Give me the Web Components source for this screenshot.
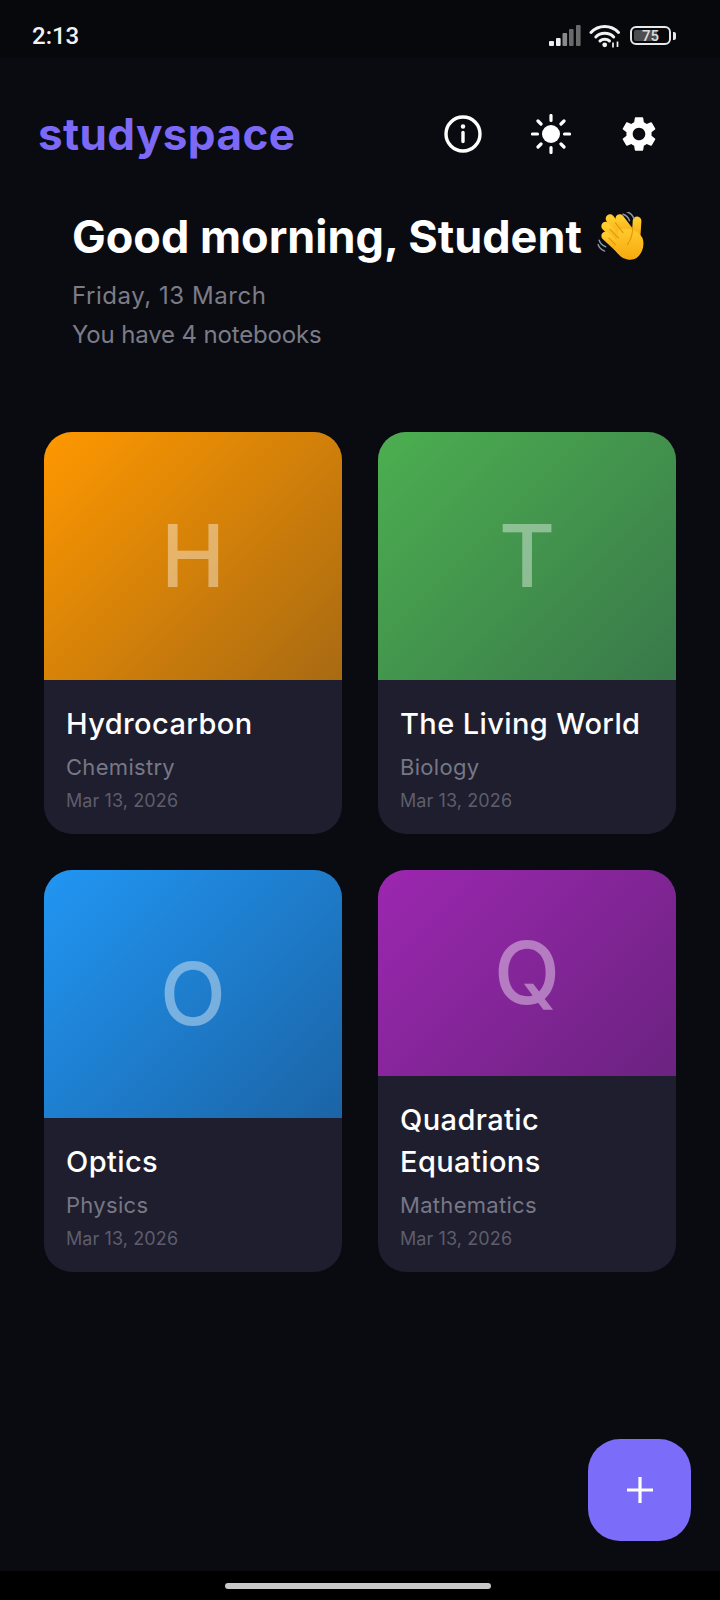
<!DOCTYPE html>
<html>
<head>
<meta charset="utf-8">
<title>studyspace</title>
<style>
    html, body { margin: 0; padding: 0; background: #0a0b10; }
    body { width: 720px; height: 1600px; overflow: hidden; font-family: Inter, "Noto Sans", sans-serif; }
</style>
</head>
<body>
<app-shell>
    <status-bar slot="status"></status-bar>
    <top-bar slot="top"></top-bar>
    <greeting-block slot="greeting"></greeting-block>
    <notebook-grid slot="grid">
        <notebook-card letter="H" title="Hydrocarbon" subject="Chemistry" date="Mar 13, 2026" from="#ff9800" to="#a86a12"></notebook-card>
        <notebook-card letter="T" title="The Living World" subject="Biology" date="Mar 13, 2026" from="#4caf50" to="#39784a"></notebook-card>
        <notebook-card letter="O" title="Optics" subject="Physics" date="Mar 13, 2026" from="#2196f3" to="#1b64a6"></notebook-card>
        <notebook-card letter="Q" title="Quadratic Equations" subject="Mathematics" date="Mar 13, 2026" from="#9c27b0" to="#6b2380"></notebook-card>
    </notebook-grid>
    <add-button slot="fab"></add-button>
</app-shell>

<script>
// ==== Web Component: AppShell ====
class AppShell extends HTMLElement {
    constructor() {
        super();
        this.attachShadow({ mode: 'open' });
        this.shadowRoot.innerHTML = `
            <style>
                :host {
                    display: flex;
                    flex-direction: column;
                    position: relative;
                    width: 720px;
                    height: 1600px;
                    background: #0a0b10;
                }
                main { flex: 1; }
                .nav {
                    height: 29px;
                    background: #000;
                    display: flex;
                    justify-content: center;
                    align-items: center;
                }
                .pill {
                    width: 266px;
                    height: 6px;
                    border-radius: 3px;
                    margin-right: 4px;
                    background: #c9c9c9;
                }
            </style>
            <slot name="status"></slot>
            <main>
                <slot name="top"></slot>
                <slot name="greeting"></slot>
                <slot name="grid"></slot>
            </main>
            <slot name="fab"></slot>
            <div class="nav"><div class="pill"></div></div>
        `;
    }
}

// ==== Web Component: StatusBar ====
class StatusBar extends HTMLElement {
    constructor() {
        super();
        this.attachShadow({ mode: 'open' });
        this.shadowRoot.innerHTML = `
            <style>
                :host {
                    display: flex;
                    align-items: center;
                    justify-content: space-between;
                    box-sizing: border-box;
                    height: 58px;
                    padding: 13px 44px 0 32px;
                    background: #07080b;
                    color: #f2f2f2;
                }
                .time { font: 500 24px Roboto, sans-serif; }
                .icons { display: flex; align-items: center; gap: 8px; }
                svg { display: block; }
                .battery {
                    width: 41px;
                    height: 19px;
                    box-sizing: border-box;
                    border: 2px solid #e8e8e8;
                    border-radius: 6px;
                    padding: 2px;
                    display: flex;
                    align-items: center;
                    justify-content: center;
                    font: 500 15px Roboto, sans-serif;
                    color: #dcdcdc;
                    background: linear-gradient(90deg, #4e4e50 0 70%, transparent 70%) content-box;
                }
                .nub {
                    width: 3px;
                    height: 8px;
                    background: #e8e8e8;
                    border-radius: 0 2px 2px 0;
                    margin-left: -6px;
                }
            </style>
            <span class="time">2:13</span>
            <div class="icons">
                <svg width="32" height="21" viewBox="0 0 32 21">
                    <rect x="0" y="16" width="5" height="5" rx="1" fill="#eee"/>
                    <rect x="7" y="13" width="4.6" height="8" rx="1" fill="#eee"/>
                    <rect x="13.5" y="8" width="4.6" height="13" rx="1" fill="#8a8a8a"/>
                    <rect x="20" y="4" width="4.6" height="17" rx="1" fill="#6a6a6a"/>
                    <rect x="27" y="0" width="4.6" height="21" rx="1" fill="#6a6a6a"/>
                </svg>
                <svg width="33" height="24" viewBox="0 0 33 24" fill="none" stroke="#f2f2f2" stroke-width="3" stroke-linecap="round">
                    <path d="M2 8.5C9.5 0.5 22 0.5 29.5 8.5"/>
                    <path d="M6.8 13C11.5 8 20 8 24.7 13"/>
                    <path d="M11 17C13.5 14.8 18 14.8 20.5 17"/>
                    <circle cx="15.7" cy="20.8" r="2.4" fill="#f2f2f2" stroke="none"/>
                    <path d="M24 18.5v5M28.5 17.5v5.5" stroke-width="1.7" stroke-linecap="butt"/>
                </svg>
                <span class="battery">75</span>
                <span class="nub"></span>
            </div>
        `;
    }
}

// ==== Web Component: TopBar ====
class TopBar extends HTMLElement {
    constructor() {
        super();
        this.attachShadow({ mode: 'open' });
        this.shadowRoot.innerHTML = `
            <style>
                :host {
                    display: flex;
                    align-items: center;
                    justify-content: space-between;
                    height: 72px;
                    padding: 40px 61px 0 38px;
                }
                .logo {
                    font: 700 44px Inter, sans-serif;
                    letter-spacing: 0.4px;
                    color: #7c6af7;
                }
                .icons { display: flex; align-items: center; gap: 48px; }
                svg { display: block; }
                .gear { margin: -1px -1px -1px -1px; }
            </style>
            <span class="logo">studyspace</span>
            <div class="icons">
                <svg width="40" height="40" viewBox="0 0 40 40" fill="none" stroke="#fff" stroke-width="3.4" stroke-linecap="round">
                    <circle cx="20" cy="20" r="17"/>
                    <path d="M20 18.5v9"/>
                    <circle cx="20" cy="12.5" r="2.2" fill="#fff" stroke="none"/>
                </svg>
                <svg width="40" height="40" viewBox="0 0 40 40" fill="none" stroke="#fff" stroke-width="3.2" stroke-linecap="round">
                    <circle cx="20" cy="20" r="9" fill="#fff" stroke="none"/>
                    <path d="M20 1.5v5M20 33.5v5M1.5 20h5M33.5 20h5M7 7l3 3M30 30l3 3M7 33l3-3M30 10l3-3"/>
                </svg>
                <svg class="gear" width="42" height="42" viewBox="0 0 24 24" fill="#fff">
                    <path d="M19.14 12.94c.04-.3.06-.61.06-.94 0-.32-.02-.64-.07-.94l2.03-1.58a.49.49 0 0 0 .12-.61l-1.92-3.32a.488.488 0 0 0-.59-.22l-2.39.96c-.5-.38-1.03-.7-1.62-.94l-.36-2.54a.484.484 0 0 0-.48-.41h-3.84c-.24 0-.43.17-.47.41l-.36 2.54c-.59.24-1.13.57-1.62.94l-2.39-.96c-.22-.08-.47 0-.59.22L2.74 8.87c-.12.21-.08.47.12.61l2.03 1.58c-.05.3-.09.63-.09.94s.02.64.07.94l-2.03 1.58a.49.49 0 0 0-.12.61l1.92 3.32c.12.22.37.29.59.22l2.39-.96c.5.38 1.03.7 1.62.94l.36 2.54c.05.24.24.41.48.41h3.84c.24 0 .44-.17.47-.41l.36-2.54c.59-.24 1.13-.56 1.62-.94l2.39.96c.22.08.47 0 .59-.22l1.92-3.32c.12-.22.07-.47-.12-.61l-2.01-1.58zM12 15.6c-1.98 0-3.6-1.62-3.6-3.6s1.62-3.6 3.6-3.6 3.6 1.62 3.6 3.6-1.62 3.6-3.6 3.6z"/>
                </svg>
            </div>
        `;
    }
}

// ==== Web Component: GreetingBlock ====
class GreetingBlock extends HTMLElement {
    constructor() {
        super();
        this.attachShadow({ mode: 'open' });
        this.shadowRoot.innerHTML = `
            <style>
                :host {
                    display: block;
                    padding: 37px 20px 0 72px;
                    font-family: Inter, sans-serif;
                }
                h1 {
                    margin: 0;
                    display: flex;
                    align-items: center;
                    gap: 15px;
                    font-size: 45px;
                    line-height: 60px;
                    font-weight: 700;
                    letter-spacing: 0;
                    color: #fff;
                }
                p {
                    margin: 0;
                    font-size: 24px;
                    line-height: 39px;
                    color: #7c7c88;
                }
                .date { margin-top: 9px; letter-spacing: 0.55px; }
                .count { letter-spacing: -0.15px; }
            </style>
            <h1>Good morning, Student
                <svg width="52" height="50" viewBox="12 10 48 46">
                    <defs>
                        <linearGradient id="skin" x1="0" y1="0" x2="0" y2="1">
                            <stop offset="0" stop-color="#ffcb2e"/>
                            <stop offset="1" stop-color="#f7a80d"/>
                        </linearGradient>
                    </defs>
                    <g fill="none" stroke="url(#skin)" stroke-width="8" stroke-linecap="round">
                        <path d="M33 16L45 32"/>
                        <path d="M24 16L38 34"/>
                        <path d="M20 23L36 39"/>
                        <path d="M20 32L34 45"/>
                        <path d="M49 18L48 34"/>
                    </g>
                    <path d="M32 26C40 24 50 26 54 34 57 42 52 54 43 54 36 54 32 50 28 44Z" fill="url(#skin)"/>
                    <path d="M29 20L36 29M24 26L32 34M23 34L29 40M45 24C45 30 43 36 40 40" fill="none" stroke="#e2960c" stroke-width="1" stroke-linecap="round"/>
                    <path d="M36 12c3 1 5 3 6 6M40 10c3 1 5 3 6 6M14 36c1 3 3 5 6 6M13 40c1 3 3 5 6 6" fill="none" stroke="#8b98a3" stroke-width="1.3" stroke-linecap="round"/>
                </svg>
            </h1>
            <p class="date">Friday, 13 March</p>
            <p class="count">You have 4 notebooks</p>
        `;
    }
}

// ==== Web Component: NotebookGrid ====
class NotebookGrid extends HTMLElement {
    constructor() {
        super();
        this.attachShadow({ mode: 'open' });
        this.shadowRoot.innerHTML = `
            <style>
                :host {
                    display: grid;
                    grid-template-columns: 298px 298px;
                    grid-auto-rows: 402px;
                    column-gap: 36px;
                    row-gap: 36px;
                    padding: 78px 44px 0;
                }
            </style>
            <slot></slot>
        `;
    }
}

// ==== Web Component: NotebookCard ====
class NotebookCard extends HTMLElement {
    constructor() {
        super();
        this.attachShadow({ mode: 'open' });
    }

    connectedCallback() {
        const from = this.getAttribute('from');
        const to = this.getAttribute('to');
        this.shadowRoot.innerHTML = `
            <style>
                :host {
                    display: flex;
                    flex-direction: column;
                    border-radius: 28px;
                    overflow: hidden;
                    background: #1e1e2e;
                    font-family: Inter, sans-serif;
                }
                .cover {
                    flex: 1;
                    display: flex;
                    align-items: center;
                    justify-content: center;
                    background: linear-gradient(135deg, ${from}, ${to});
                    color: rgba(255, 255, 255, 0.4);
                    font-size: 86px;
                    font-weight: 550;
                }
                .info { padding: 23px 22px 18px; }
                .title {
                    font-size: 29px;
                    line-height: 42px;
                    font-weight: 550;
                    letter-spacing: 0.4px;
                    color: #fff;
                }
                .subject {
                    margin-top: 6px;
                    font-size: 22px;
                    line-height: 32px;
                    letter-spacing: 0.3px;
                    color: #777785;
                }
                .date {
                    margin-top: 3px;
                    font-size: 18px;
                    line-height: 30px;
                    letter-spacing: 0.1px;
                    color: #5d5d6c;
                }
            </style>
            <div class="cover">${this.getAttribute('letter')}</div>
            <div class="info">
                <div class="title">${this.getAttribute('title')}</div>
                <div class="subject">${this.getAttribute('subject')}</div>
                <div class="date">${this.getAttribute('date')}</div>
            </div>
        `;
    }
}

// ==== Web Component: AddButton ====
class AddButton extends HTMLElement {
    constructor() {
        super();
        this.attachShadow({ mode: 'open' });
        this.shadowRoot.innerHTML = `
            <style>
                :host {
                    position: absolute;
                    left: 588px;
                    top: 1439px;
                    width: 103px;
                    height: 102px;
                    border-radius: 32px;
                    background: #7c6cfa;
                    display: flex;
                    align-items: center;
                    justify-content: center;
                }
            </style>
            <svg width="26" height="26" viewBox="0 0 26 26" stroke="#fff" stroke-width="3.2" stroke-linecap="butt">
                <path d="M13 0v26M0 13h26"/>
            </svg>
        `;
    }
}

// ==== Define Custom Elements ====
customElements.define('app-shell', AppShell);
customElements.define('status-bar', StatusBar);
customElements.define('top-bar', TopBar);
customElements.define('greeting-block', GreetingBlock);
customElements.define('notebook-grid', NotebookGrid);
customElements.define('notebook-card', NotebookCard);
customElements.define('add-button', AddButton);
</script>
</body>
</html>
